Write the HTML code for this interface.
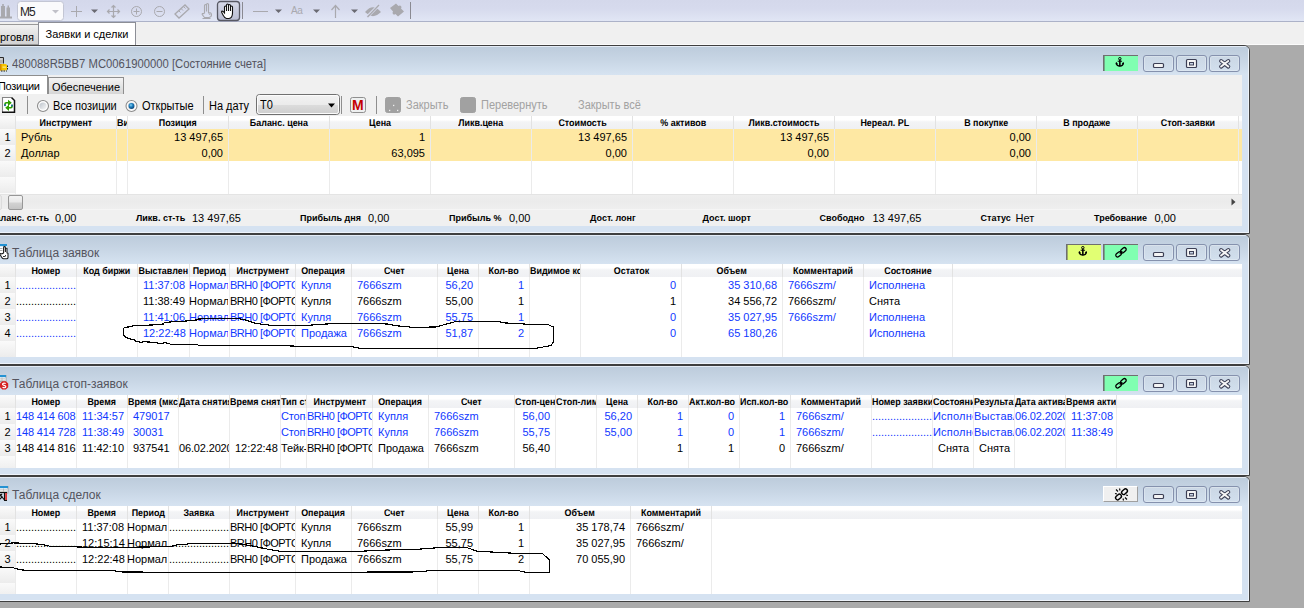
<!DOCTYPE html>
<html lang="ru"><head><meta charset="utf-8"><title>QUIK</title>
<style>
html,body{margin:0;padding:0}
body{width:1304px;height:608px;overflow:hidden;background:#f0f0f0;position:relative;font-family:"Liberation Sans",sans-serif;font-size:11px;color:#000}
div,span{box-sizing:border-box}
.a{position:absolute}
.tb{position:absolute;left:0;top:0;width:1304px;height:21px;background:linear-gradient(#d4d8eb,#d6daed 40%,#e1e6f5)}
.win{position:absolute;left:-9px;width:1259px;border:1px solid #3f3f3f;border-radius:0 6px 0 0;background:#d5e2f1;overflow:hidden}
.ttl{position:absolute;left:0;top:0;width:100%;height:29px;background:linear-gradient(#e4ecf6 0,#e4ecf6 1px,#bdccdc 1px,#c8d6e5 50%,#d6e3f1 100%)}
.ttx{position:absolute;left:20px;top:4px;line-height:29px;font-size:12px;color:#54545e;white-space:nowrap}
.cnt{position:absolute;left:8px;top:29px;width:1242px;background:#fff;overflow:hidden}
.hd{position:absolute;left:0;top:0;width:1242px;height:13px;background:linear-gradient(#fff 0,#fff 30%,#f3f4f6 45%,#eff0f3 100%)}
.hs{flex:none;font-size:9.8px;transform:scaleX(.91);text-rendering:geometricPrecision}
.h.hl{justify-content:flex-start}
.hl .hs{transform-origin:0 50%}
.h{position:absolute;top:0;height:13px;line-height:15px;font-size:9px;font-weight:bold;display:flex;justify-content:center;white-space:nowrap;overflow:hidden;border-right:1px solid #e2e2e2}
.c{position:absolute;height:16px;line-height:16px;white-space:nowrap;overflow:hidden}
.r{text-align:right;padding-right:5px}
.l{padding-left:5px}
.m{text-align:center}
.o{padding-left:0}
.k{letter-spacing:-.5px}
.k2{letter-spacing:-.15px}
.k3{letter-spacing:.2px}
.o1{padding-left:1px}
.on{margin-left:-1px}
.d{padding-left:0;letter-spacing:-.056px}
.b{color:#1038ff}
.gl{position:absolute;width:1px;background:#ebebeb}
.rn{position:absolute;left:0;width:15px;height:16px;line-height:16px;text-align:center;background:linear-gradient(#fafafa,#ececec)}
.wb{position:absolute;top:9px;width:31px;height:17px;border:1px solid #8591ad;border-radius:3px;background:linear-gradient(rgba(255,255,255,.12),rgba(255,255,255,.0));box-shadow:inset 0 0 0 1px rgba(255,255,255,.25)}
.sb{position:absolute;top:9px;width:35px;height:16px}
.dis{color:#a2a2a2}
.sl{position:absolute;top:135px;height:16px;line-height:16px;font-size:9px;font-weight:bold;white-space:nowrap}
.sv{position:absolute;top:135px;height:16px;line-height:16px;font-size:11px;white-space:nowrap}
</style></head>
<body>
<div class="a" style="left:0;top:45px;width:1304px;height:563px;background:#ababab"></div>
<div class="a" style="left:0;top:44px;width:1304px;height:1px;background:#fbfbfb"></div>
<div class="tb"></div>
<div class="a" style="left:0;top:21px;width:1304px;height:1px;background:#acb2c8"></div>
<svg class="a" style="left:0;top:0" width="420" height="22" viewBox="0 0 420 22" fill="none">
<g fill="#a9a9ae"><rect x="0" y="16.500" width="12" height="2"/><rect x="1" y="6" width="4" height="11"/><rect x="2.200" y="4" width="1.600" height="2.500"/><rect x="6.500" y="7.500" width="3.500" height="10"/><rect x="7.500" y="5.500" width="1.500" height="2.500"/></g>
<rect x="17.5" y="1.5" width="46" height="19" rx="3" fill="#fafafc" stroke="#c3c6d4"/>
<path d="M52 10h7l-3.5 3.5z" fill="#c0c0c8"/>
<g stroke="#a9a9ae" stroke-width="1"><path d="M76.5 6v11M71 11.5h11"/></g>
<path d="M91 9.5h7l-3.5 3.5z" fill="#6a6a72"/>
<g stroke="#a9a9ae" stroke-width="1.2"><path d="M113.5 5.5v12M107.5 11.5h12M111.5 7.5l2-2 2 2M111.5 15.5l2 2 2-2M109.5 9.5l-2 2 2 2M117.5 9.5l2 2-2 2"/></g>
<g stroke="#a9a9ae" stroke-width="1"><circle cx="136.5" cy="11.5" r="5"/><path d="M133.5 11.5h6M136.5 8.5v6"/><circle cx="159.5" cy="11.5" r="5"/><path d="M156.5 11.5h6"/></g>
<g stroke="#a9a9ae" stroke-width="1.3"><path d="M175 14l10-9 4 4-10 9z"/><path d="M179 11l1.5 1.5M181.5 9l1.5 1.5M184 7l1.5 1.5" stroke-width="1"/></g>
<g stroke="#a9a9ae" stroke-width="1.100"><path d="M204.500 13v-7.500a1 1 0 0 1 2 0v6v-7a1 1 0 0 1 2 0v8q3-.2 3 2.300q0 2.200-2.500 2.700h-4.500l-2.300-3q-.2-1.500 1.300-.8z"/><path d="M208.500 13.500q1.500.2 1.500 1.500M202.500 18.500h8"/></g>
<defs><linearGradient id="ab" x1="0" y1="0" x2="0" y2="1"><stop offset="0" stop-color="#d6d9e8"/><stop offset="1" stop-color="#b9bdd2"/></linearGradient></defs><rect x="217.500" y="1.500" width="22" height="19" rx="3" fill="url(#ab)" stroke="#585964" stroke-width="1.300"/>
<path d="M224.500 12v-5a1 1 0 0 1 2 0v4v-6a1 1 0 0 1 2 0v6v-5.500a1 1 0 0 1 2 0v5.500v-4a1 1 0 0 1 2 0v6q0 5-3.500 5.500h-2.500q-2-.5-3.500-3.500l-1.500-3q.2-1.500 1.700-.5l1.300 1.500z" fill="#fff" stroke="#111" stroke-width="1.1"/>
<path d="M242.500 2v17" stroke="#8a8a92"/>
<path d="M253 11.500h15" stroke="#a9a9ae" stroke-width="1"/>
<path d="M275 9.500h7l-3.500 3.500z" fill="#6a6a72"/>
<path d="M313 9.500h7l-3.500 3.500z" fill="#6a6a72"/>
<g stroke="#a9a9ae" stroke-width="1.2"><path d="M335.500 18v-12M331.500 10l4-4.500 4 4.500"/></g>
<path d="M351 9.500h7l-3.500 3.500z" fill="#6a6a72"/>
<g stroke="#a9a9ae" stroke-width="1.3"><path d="M366 12q7-8 14 0q-7 7-14 0z" fill="#a9a9ae"/><path d="M367 17l12-12" stroke="#dadef0" stroke-width="3"/><path d="M367.500 17l11.500-12"/></g>
<path d="M390 8l6-4.500 2.500 2.500q1.500-1 2.500 0t0 2.500l3 3-6 5-2.500-2.500q-1.500 1-2.500 0t0-2.500z" fill="#a9a9ae"/>
<path d="M410.500 2v17" stroke="#8a8a92"/>
</svg>
<span class="a" style="left:20px;top:5px;font-size:12px;line-height:14px;color:#222;letter-spacing:-1px">M5</span>
<span class="a" style="left:291px;top:4px;font-size:10px;line-height:14px;color:#a9a9ae;letter-spacing:-.3px">Aa</span>
<div class="a" style="left:-2px;top:24px;width:41px;height:21px;border:1px solid #999;background:linear-gradient(#f2f2f2,#d2d2d2);line-height:25px;white-space:nowrap;padding-left:1px;font-size:11px">рговля</div>
<div class="a" style="left:38px;top:22px;width:98px;height:23px;border:1px solid #8c8e96;border-bottom:none;background:#fff;line-height:23px;text-align:center;font-size:11px;white-space:nowrap">Заявки и сделки</div>
<div class="win" style="top:45px;height:189px"><div class="ttl"></div><svg class="a" style="left:8px;top:11px" width="9" height="15" viewBox="0 0 9 15"><rect x="-1" y="0.500" width="4.500" height="6" fill="#b4b4b4"/><path d="M-1 0.500h4.500v6" fill="none" stroke="#2a2a2a" stroke-width="1"/><path d="M0 2h2.500" stroke="#e8e8e8" stroke-width="1"/><rect x="-1" y="7" width="8" height="6.500" rx="1.500" fill="#f5c400"/><rect x="-1" y="7" width="2.500" height="6.500" fill="#d88a00"/><rect x="2.500" y="9.500" width="3.500" height="1.300" fill="#ffe680"/><path d="M7.500 8.500v5M1 14h6" stroke="#222" stroke-width="1" stroke-dasharray="1.500 1"/></svg><div class="ttx" style="transform:scaleX(.94);transform-origin:0 50%">480088R5BB7 MC0061900000 [Состояние счета]</div><div class="sb" style="left:1111px;background:#80ffb1;border-top:1px solid #6f6f6f;border-left:1px solid #6f6f6f;box-shadow:inset 1px 0 0 rgba(100,100,100,.55)"><svg class="a" style="left:11.100px;top:1.400px" width="9.700" height="10.600" viewBox="0 0 11 12" fill="none"><circle cx="5.500" cy="1.900" r="1.400" stroke="#000" stroke-width="1.100"/><path d="M5.500 3v7.500" stroke="#000" stroke-width="1.800"/><path d="M3 4.800h5" stroke="#000" stroke-width="1.100"/><path d="M1.500 6.500q.3 3.800 4 3.800q3.700 0 4-3.800" stroke="#000" stroke-width="1.700"/><path d="M.6 8.200l.9-2.600 1.700 2z M10.400 8.200l-.9-2.600-1.700 2z" fill="#000"/></svg></div><div class="wb" style="left:1151px"></div><div class="wb" style="left:1184px"></div><div class="wb" style="left:1217px"></div><svg class="a" style="left:1151px;top:9px" width="100" height="17" viewBox="0 0 100 17" fill="none">
<rect x="10.500" y="8.500" width="10" height="4" rx="1" fill="#f4f4f4" stroke="#3c3f55" stroke-width="1.2"/>
<rect x="43.500" y="4.500" width="10" height="8" rx="1" fill="#f4f4f4" stroke="#3c3f55" stroke-width="1.2"/><rect x="46.500" y="7.500" width="4" height="2.500" fill="#c8d3e4" stroke="#3c3f55" stroke-width="1"/>
<path d="M78.100 6l7.200 5.600M85.300 6l-7.200 5.600" stroke="#3c3f55" stroke-width="4" stroke-linecap="round"/><path d="M78.100 6l7.200 5.600M85.300 6l-7.200 5.600" stroke="#f6f6f6" stroke-width="1.900" stroke-linecap="round"/>
</svg><div class="a" style="left:1256px;top:1px;width:1px;height:189px;background:#eef3fa"></div><div class="a" style="left:0;bottom:0;width:1257px;height:1px;background:#eef3fa"></div><div class="cnt" style="height:151px"><div class="a" style="left:0;top:0;width:1242px;height:41px;background:#f0f0f0"></div><div class="a" style="left:48px;top:2px;width:76px;height:17px;border:1px solid #8e8e8e;border-bottom:none;background:linear-gradient(#f4f4f4,#d6d6d6);line-height:19px;text-align:center;white-space:nowrap">Обеспечение</div><div class="a" style="left:-2px;top:0;width:50px;height:19px;border:1px solid #8e8e8e;border-bottom:none;background:#fff;line-height:21px;white-space:nowrap;padding-left:0px;text-indent:-1px;letter-spacing:-.3px">Позиции</div><svg class="a" style="left:0;top:19px" width="660" height="22" viewBox="0 0 660 22" fill="none">
<path d="M2.500 3.500h9l3 3v12h-12z" fill="#fff"/><path d="M2.500 18.500v-15h9" stroke="#858585" stroke-width="1.100"/><path d="M11.500 3.500l3 3v11.700h-12.500" stroke="#111" stroke-width="1.500"/>
<path d="M4.200 11.800v-1.800q0-2 2-2h1.800v-2.300l3.800 3.100-3.800 3.100v-2.300h-1.500q-.7 0-.7.700v1.500z" fill="#2ea000"/><path d="M12.800 10.800v1.800q0 2-2 2h-1.800v2.300l-3.800-3.100 3.800-3.100v2.300h1.500q.7 0 .7-.700v-1.500z" fill="#2ea000"/><rect x="4.200" y="10.300" width="1.600" height="1.800" fill="#1565a8"/><rect x="11.200" y="10.600" width="1.600" height="1.800" fill="#1565a8"/>
<path d="M27.500 2v18M203.500 2v18M341.500 2v18M376.500 2v18" stroke="#8e8e8e"/>
<defs><linearGradient id="rg" x1="0" y1="0" x2="1" y2="1"><stop offset="0" stop-color="#bcc3cb"/><stop offset="1" stop-color="#fafafa"/></linearGradient><radialGradient id="rb" cx=".4" cy=".35" r=".7"><stop offset="0" stop-color="#8fd6f4"/><stop offset=".45" stop-color="#1c7fc0"/><stop offset="1" stop-color="#0c3e6e"/></radialGradient></defs>
<circle cx="43" cy="12" r="5.500" fill="#fdfdfd" stroke="#8c8c8c" stroke-width="1.100"/><circle cx="43" cy="12" r="3.600" fill="url(#rg)"/>
<circle cx="131.500" cy="12" r="5.500" fill="#fdfdfd" stroke="#8c8c8c" stroke-width="1.100"/><circle cx="131.500" cy="12" r="3.600" fill="url(#rg)"/><circle cx="131.500" cy="12" r="2.900" fill="url(#rb)"/>
<rect x="256.500" y="0.500" width="83" height="20" rx="3" fill="#e4e4e4" stroke="#707070"/>
<rect x="257.500" y="1.500" width="81" height="18" rx="2" fill="url(#cg)" stroke="#fcfcfc"/>
<defs><linearGradient id="cg" x1="0" y1="0" x2="0" y2="1"><stop offset="0" stop-color="#f2f2f2"/><stop offset=".5" stop-color="#ebebeb"/><stop offset=".5" stop-color="#dddddd"/><stop offset="1" stop-color="#cfcfcf"/></linearGradient></defs>
<path d="M328 9.500h7l-3.500 4z" fill="#000"/>
<rect x="350.500" y="3.500" width="15" height="15" rx="2" fill="#eef0f0" stroke="#8f8f8f"/>
<rect x="385.500" y="3.500" width="15" height="15" rx="2" fill="#a1a1a1" stroke="#a1a1a1"/><rect x="389" y="15.800" width="1.300" height="1.300" fill="#f0f0f0"/><rect x="397" y="15.800" width="1.300" height="1.300" fill="#f0f0f0"/><rect x="393" y="10.800" width="1.300" height="1.300" fill="#f0f0f0"/>
<rect x="460.500" y="3.500" width="15" height="15" rx="2" fill="#a1a1a1" stroke="#a1a1a1"/>
</svg><span class="a" style="left:53px;top:23px;line-height:16px;white-space:nowrap;font-size:12px;transform:scaleX(.917);transform-origin:0 50%;">Все позиции</span><span class="a" style="left:142px;top:23px;line-height:16px;white-space:nowrap;font-size:12px;transform:scaleX(.917);transform-origin:0 50%;">Открытые</span><span class="a" style="left:209px;top:23px;line-height:16px;white-space:nowrap;font-size:12px;transform:scaleX(.917);transform-origin:0 50%;">На дату</span><span class="a" style="left:260px;top:22px;line-height:16px;white-space:nowrap;font-size:12px;transform:scaleX(.917);transform-origin:0 50%;">T0</span><span class="a" style="left:352px;top:22px;line-height:16px;white-space:nowrap;font-size:12px;transform:scaleX(.917);transform-origin:0 50%;color:#c40000;font-weight:bold;font-size:14px;transform:none">M</span><span class="a" style="left:406px;top:22px;line-height:16px;white-space:nowrap;font-size:12px;transform:scaleX(.917);transform-origin:0 50%;color:#a2a2a2">Закрыть</span><span class="a" style="left:481px;top:22px;line-height:16px;white-space:nowrap;font-size:12px;transform:scaleX(.917);transform-origin:0 50%;color:#a2a2a2">Перевернуть</span><span class="a" style="left:578px;top:22px;line-height:16px;white-space:nowrap;font-size:12px;transform:scaleX(.917);transform-origin:0 50%;color:#a2a2a2">Закрыть всё</span><div class="a" style="left:0;top:41px;width:1242px;height:78px;background:#fff;overflow:hidden"><div class="a" style="left:16px;top:13px;width:1226px;height:32px;background:#fee8a3"></div><div class="hd"></div><div class="h" style="left:0;width:16px;background:linear-gradient(#fbfbfb,#ececec)"></div><div class="h" style="left:16px;width:101px"><span class="hs">Инструмент</span></div><div class="h hl" style="left:117px;width:11px"><span class="hs">Ви</span></div><div class="h" style="left:128px;width:101px"><span class="hs">Позиция</span></div><div class="h" style="left:229px;width:101px"><span class="hs">Баланс. цена</span></div><div class="h" style="left:330px;width:101px"><span class="hs">Цена</span></div><div class="h" style="left:431px;width:101px"><span class="hs">Ликв.цена</span></div><div class="h" style="left:532px;width:101px"><span class="hs">Стоимость</span></div><div class="h" style="left:633px;width:101px"><span class="hs">% активов</span></div><div class="h" style="left:734px;width:101px"><span class="hs">Ликв.стоимость</span></div><div class="h" style="left:835px;width:101px"><span class="hs">Нереал. PL</span></div><div class="h" style="left:936px;width:101px"><span class="hs">В покупке</span></div><div class="h" style="left:1037px;width:101px"><span class="hs">В продаже</span></div><div class="h" style="left:1138px;width:101px"><span class="hs">Стоп-заявки</span></div><div class="gl" style="left:15px;top:13px;height:65px"></div><div class="gl" style="left:116px;top:13px;height:65px"></div><div class="gl" style="left:127px;top:13px;height:65px"></div><div class="gl" style="left:228px;top:13px;height:65px"></div><div class="gl" style="left:329px;top:13px;height:65px"></div><div class="gl" style="left:430px;top:13px;height:65px"></div><div class="gl" style="left:531px;top:13px;height:65px"></div><div class="gl" style="left:632px;top:13px;height:65px"></div><div class="gl" style="left:733px;top:13px;height:65px"></div><div class="gl" style="left:834px;top:13px;height:65px"></div><div class="gl" style="left:935px;top:13px;height:65px"></div><div class="gl" style="left:1036px;top:13px;height:65px"></div><div class="gl" style="left:1137px;top:13px;height:65px"></div><div class="gl" style="left:1238px;top:13px;height:65px"></div><div class="rn" style="top:13px">1</div><div class="rn" style="top:29px">2</div><div class="rn" style="top:45px"></div><div class="rn" style="top:61px"></div><div class="rn" style="top:77px"></div><div class="c l " style="left:16px;top:13px;width:100px">Рубль</div><div class="c r " style="left:128px;top:13px;width:100px">13 497,65</div><div class="c r " style="left:330px;top:13px;width:100px">1</div><div class="c r " style="left:532px;top:13px;width:100px">13 497,65</div><div class="c r " style="left:734px;top:13px;width:100px">13 497,65</div><div class="c r " style="left:936px;top:13px;width:100px">0,00</div><div class="c l " style="left:16px;top:29px;width:100px">Доллар</div><div class="c r " style="left:128px;top:29px;width:100px">0,00</div><div class="c r " style="left:330px;top:29px;width:100px">63,095</div><div class="c r " style="left:532px;top:29px;width:100px">0,00</div><div class="c r " style="left:734px;top:29px;width:100px">0,00</div><div class="c r " style="left:936px;top:29px;width:100px">0,00</div></div><div class="a" style="left:0;top:119px;width:1242px;height:16px;background:linear-gradient(#eeeeee,#ebebeb 50%,#efefef);border-top:1px solid #e4e4e4;border-bottom:1px solid #f5f5f5"></div><div class="a" style="left:8px;top:120px;width:15px;height:15px;border:1px solid #979797;border-radius:2px;background:linear-gradient(#f4f4f4 0,#e8e8e8 45%,#d2d2d2 55%,#c4c4c4 100%)"></div><div class="a" style="left:-12px;top:120px;width:14px;height:15px;border:1px solid #dcdcdc;border-radius:2px;background:#eaeaea"></div><svg class="a" style="left:1228px;top:121px" width="10" height="12" viewBox="0 0 10 12"><path d="M3.500 2.500l4 3.500-4 3.500z" fill="#444"/></svg><div class="a" style="left:0;top:135px;width:1242px;height:16px;background:#f0f0f0"></div><span class="sl" style="right:1193px">Баланс. ст-ть</span><span class="sv" style="left:55px">0,00</span><span class="sl" style="left:136px">Ликв. ст-ть</span><span class="sv" style="left:192px">13 497,65</span><span class="sl" style="left:300px">Прибыль дня</span><span class="sv" style="left:368px">0,00</span><span class="sl" style="left:449px">Прибыль %</span><span class="sv" style="left:509px">0,00</span><span class="sl" style="left:590px">Дост. лонг</span><span class="sl" style="left:702.5px">Дост. шорт</span><span class="sl" style="left:819.5px">Свободно</span><span class="sv" style="left:872.5px">13 497,65</span><span class="sl" style="left:980.5px">Статус</span><span class="sv" style="left:1015.5px">Нет</span><span class="sl" style="left:1094px">Требование</span><span class="sv" style="left:1154.5px">0,00</span></div></div>
<div class="win" style="top:234px;height:131px"><div class="ttl"></div><svg class="a" style="left:8px;top:9px" width="9" height="16" viewBox="0 0 9 16"><rect x="-1" y="0" width="8" height="9" fill="#fff"/><rect x="-1" y="0" width="8" height="2.200" fill="#2492d2"/><path d="M0 4.500h2.500M0 6.500h2.500" stroke="#b0b0b0" stroke-width="1"/><path d="M3.600 9v-5.500a.9.900 0 0 1 1.800 0v4v-3.500l1.600.4v4.600l1 .2v4.300q0 1.300-1.300 1.300h-3.200q-1.200-.2-2-1.800l-1.600-2.800q.5-1.200 1.700-.3z" fill="#fff" stroke="#1e1e1e" stroke-width="1.100" stroke-linejoin="round"/><path d="M3 12.500h2M5.500 11v1.500" stroke="#1e1e1e" stroke-width=".9"/></svg><div class="ttx">Таблица заявок</div><div class="sb" style="left:1074px;background:#e1ff73;border-top:1px solid #6f6f6f;border-left:1px solid #6f6f6f;box-shadow:inset 1px 0 0 rgba(100,100,100,.55)"><svg class="a" style="left:11.100px;top:1.400px" width="9.700" height="10.600" viewBox="0 0 11 12" fill="none"><circle cx="5.500" cy="1.900" r="1.400" stroke="#000" stroke-width="1.100"/><path d="M5.500 3v7.500" stroke="#000" stroke-width="1.800"/><path d="M3 4.800h5" stroke="#000" stroke-width="1.100"/><path d="M1.500 6.500q.3 3.800 4 3.800q3.700 0 4-3.800" stroke="#000" stroke-width="1.700"/><path d="M.6 8.200l.9-2.600 1.700 2z M10.400 8.200l-.9-2.600-1.700 2z" fill="#000"/></svg></div><div class="sb" style="left:1111px;background:#80ffb1;border-top:1px solid #6f6f6f;border-left:1px solid #6f6f6f;box-shadow:inset 1px 0 0 rgba(100,100,100,.55)"><svg class="a" style="left:8px;top:0" width="18" height="15" viewBox="0 0 18 15" fill="none"><g stroke="#000" stroke-width="1.300"><rect x="-3.100" y="-1.800" width="6.200" height="3.600" rx="1.800" transform="translate(11.400 5.200) rotate(-40)"/><rect x="-3.100" y="-1.800" width="6.200" height="3.600" rx="1.800" transform="translate(6.600 9.400) rotate(-40)"/><path d="M7.700 8.500l2.600-2.300"/></g></svg></div><div class="wb" style="left:1151px"></div><div class="wb" style="left:1184px"></div><div class="wb" style="left:1217px"></div><svg class="a" style="left:1151px;top:9px" width="100" height="17" viewBox="0 0 100 17" fill="none">
<rect x="10.500" y="8.500" width="10" height="4" rx="1" fill="#f4f4f4" stroke="#3c3f55" stroke-width="1.2"/>
<rect x="43.500" y="4.500" width="10" height="8" rx="1" fill="#f4f4f4" stroke="#3c3f55" stroke-width="1.2"/><rect x="46.500" y="7.500" width="4" height="2.500" fill="#c8d3e4" stroke="#3c3f55" stroke-width="1"/>
<path d="M78.100 6l7.200 5.600M85.300 6l-7.200 5.600" stroke="#3c3f55" stroke-width="4" stroke-linecap="round"/><path d="M78.100 6l7.200 5.600M85.300 6l-7.200 5.600" stroke="#f6f6f6" stroke-width="1.900" stroke-linecap="round"/>
</svg><div class="a" style="left:1256px;top:1px;width:1px;height:131px;background:#eef3fa"></div><div class="a" style="left:0;bottom:0;width:1257px;height:1px;background:#eef3fa"></div><div class="cnt" style="height:93px"><div class="hd"></div><div class="h" style="left:0;width:16px;background:linear-gradient(#fbfbfb,#ececec)"></div><div class="h" style="left:16px;width:61px"><span class="hs">Номер</span></div><div class="h" style="left:77px;width:61px"><span class="hs">Код биржи</span></div><div class="h" style="left:138px;width:52px"><span class="hs">Выставлен</span></div><div class="h" style="left:190px;width:40px"><span class="hs">Период</span></div><div class="h" style="left:230px;width:66px"><span class="hs">Инструмент</span></div><div class="h" style="left:296px;width:56px"><span class="hs">Операция</span></div><div class="h" style="left:352px;width:86px"><span class="hs">Счет</span></div><div class="h" style="left:438px;width:41px"><span class="hs">Цена</span></div><div class="h" style="left:479px;width:51px"><span class="hs">Кол-во</span></div><div class="h hl" style="left:530px;width:51px"><span class="hs">Видимое кол</span></div><div class="h" style="left:581px;width:101px"><span class="hs">Остаток</span></div><div class="h" style="left:682px;width:101px"><span class="hs">Объем</span></div><div class="h" style="left:783px;width:81px"><span class="hs">Комментарий</span></div><div class="h" style="left:864px;width:89px"><span class="hs">Состояние</span></div><div class="gl" style="left:15px;top:13px;height:80px"></div><div class="gl" style="left:76px;top:13px;height:80px"></div><div class="gl" style="left:137px;top:13px;height:80px"></div><div class="gl" style="left:189px;top:13px;height:80px"></div><div class="gl" style="left:229px;top:13px;height:80px"></div><div class="gl" style="left:295px;top:13px;height:80px"></div><div class="gl" style="left:351px;top:13px;height:80px"></div><div class="gl" style="left:437px;top:13px;height:80px"></div><div class="gl" style="left:478px;top:13px;height:80px"></div><div class="gl" style="left:529px;top:13px;height:80px"></div><div class="gl" style="left:580px;top:13px;height:80px"></div><div class="gl" style="left:681px;top:13px;height:80px"></div><div class="gl" style="left:782px;top:13px;height:80px"></div><div class="gl" style="left:863px;top:13px;height:80px"></div><div class="gl" style="left:952px;top:13px;height:80px"></div><div class="rn" style="top:13px">1</div><div class="rn" style="top:29px">2</div><div class="rn" style="top:45px">3</div><div class="rn" style="top:61px">4</div><div class="rn" style="top:77px"></div><div class="c d b" style="left:16px;top:13px;width:60px">......................</div><div class="c l b" style="left:138px;top:13px;width:51px">11:37:08</div><div class="c on b" style="left:190px;top:13px;width:39px">Нормальная</div><div class="c o k b" style="left:230px;top:13px;width:65px">BRH0 [ФОРТС</div><div class="c l b" style="left:296px;top:13px;width:55px">Купля</div><div class="c l b" style="left:352px;top:13px;width:85px">7666szm</div><div class="c r b" style="left:438px;top:13px;width:40px">56,20</div><div class="c r b" style="left:479px;top:13px;width:50px">1</div><div class="c r b" style="left:581px;top:13px;width:100px">0</div><div class="c r b" style="left:682px;top:13px;width:100px">35 310,68</div><div class="c l b" style="left:783px;top:13px;width:80px">7666szm/</div><div class="c l b" style="left:864px;top:13px;width:88px">Исполнена</div><div class="c d " style="left:16px;top:29px;width:60px">......................</div><div class="c l " style="left:138px;top:29px;width:51px">11:38:49</div><div class="c on " style="left:190px;top:29px;width:39px">Нормальная</div><div class="c o k " style="left:230px;top:29px;width:65px">BRH0 [ФОРТС</div><div class="c l " style="left:296px;top:29px;width:55px">Купля</div><div class="c l " style="left:352px;top:29px;width:85px">7666szm</div><div class="c r " style="left:438px;top:29px;width:40px">55,00</div><div class="c r " style="left:479px;top:29px;width:50px">1</div><div class="c r " style="left:581px;top:29px;width:100px">1</div><div class="c r " style="left:682px;top:29px;width:100px">34 556,72</div><div class="c l " style="left:783px;top:29px;width:80px">7666szm/</div><div class="c l " style="left:864px;top:29px;width:88px">Снята</div><div class="c d b" style="left:16px;top:45px;width:60px">......................</div><div class="c l b" style="left:138px;top:45px;width:51px">11:41:06</div><div class="c on b" style="left:190px;top:45px;width:39px">Нормальная</div><div class="c o k b" style="left:230px;top:45px;width:65px">BRH0 [ФОРТС</div><div class="c l b" style="left:296px;top:45px;width:55px">Купля</div><div class="c l b" style="left:352px;top:45px;width:85px">7666szm</div><div class="c r b" style="left:438px;top:45px;width:40px">55,75</div><div class="c r b" style="left:479px;top:45px;width:50px">1</div><div class="c r b" style="left:581px;top:45px;width:100px">0</div><div class="c r b" style="left:682px;top:45px;width:100px">35 027,95</div><div class="c l b" style="left:783px;top:45px;width:80px">7666szm/</div><div class="c l b" style="left:864px;top:45px;width:88px">Исполнена</div><div class="c d b" style="left:16px;top:61px;width:60px">......................</div><div class="c l b" style="left:138px;top:61px;width:51px">12:22:48</div><div class="c on b" style="left:190px;top:61px;width:39px">Нормальная</div><div class="c o k b" style="left:230px;top:61px;width:65px">BRH0 [ФОРТС</div><div class="c l b" style="left:296px;top:61px;width:55px">Продажа</div><div class="c l b" style="left:352px;top:61px;width:85px">7666szm</div><div class="c r b" style="left:438px;top:61px;width:40px">51,87</div><div class="c r b" style="left:479px;top:61px;width:50px">2</div><div class="c r b" style="left:581px;top:61px;width:100px">0</div><div class="c r b" style="left:682px;top:61px;width:100px">65 180,26</div><div class="c l b" style="left:864px;top:61px;width:88px">Исполнена</div></div></div>
<div class="win" style="top:365px;height:111px"><div class="ttl"></div><svg class="a" style="left:8px;top:9px" width="9" height="16" viewBox="0 0 9 16"><rect x="-1" y="0" width="7" height="6.500" fill="#fff" stroke="#9a9a9a" stroke-width=".8"/><rect x="-1" y="0" width="7" height="2.200" fill="#2492d2"/><path d="M0 3.800h5M0 5.300h5M2 2.500v4" stroke="#b4b4b4" stroke-width=".8"/><path d="M2.300 6.300h3.600l2.300 2.300v3.600l-2.300 2.300h-3.600l-2.300-2.300v-3.600z" fill="#d62222"/><path d="M5.700 8.600q-1.800-1-3 0q-.8 1.300 1.400 1.800q2.400.6 1.500 1.900q-1.300 1-3.100-.1" fill="none" stroke="#fff" stroke-width="1.100"/></svg><div class="ttx">Таблица стоп-заявок</div><div class="sb" style="left:1111px;background:#80ffb1;border-top:1px solid #6f6f6f;border-left:1px solid #6f6f6f;box-shadow:inset 1px 0 0 rgba(100,100,100,.55)"><svg class="a" style="left:8px;top:0" width="18" height="15" viewBox="0 0 18 15" fill="none"><g stroke="#000" stroke-width="1.300"><rect x="-3.100" y="-1.800" width="6.200" height="3.600" rx="1.800" transform="translate(11.400 5.200) rotate(-40)"/><rect x="-3.100" y="-1.800" width="6.200" height="3.600" rx="1.800" transform="translate(6.600 9.400) rotate(-40)"/><path d="M7.700 8.500l2.600-2.300"/></g></svg></div><div class="wb" style="left:1151px"></div><div class="wb" style="left:1184px"></div><div class="wb" style="left:1217px"></div><svg class="a" style="left:1151px;top:9px" width="100" height="17" viewBox="0 0 100 17" fill="none">
<rect x="10.500" y="8.500" width="10" height="4" rx="1" fill="#f4f4f4" stroke="#3c3f55" stroke-width="1.2"/>
<rect x="43.500" y="4.500" width="10" height="8" rx="1" fill="#f4f4f4" stroke="#3c3f55" stroke-width="1.2"/><rect x="46.500" y="7.500" width="4" height="2.500" fill="#c8d3e4" stroke="#3c3f55" stroke-width="1"/>
<path d="M78.100 6l7.200 5.600M85.300 6l-7.200 5.600" stroke="#3c3f55" stroke-width="4" stroke-linecap="round"/><path d="M78.100 6l7.200 5.600M85.300 6l-7.200 5.600" stroke="#f6f6f6" stroke-width="1.900" stroke-linecap="round"/>
</svg><div class="a" style="left:1256px;top:1px;width:1px;height:111px;background:#eef3fa"></div><div class="a" style="left:0;bottom:0;width:1257px;height:1px;background:#eef3fa"></div><div class="cnt" style="height:73px"><div class="hd"></div><div class="h" style="left:0;width:16px;background:linear-gradient(#fbfbfb,#ececec)"></div><div class="h" style="left:16px;width:61px"><span class="hs">Номер</span></div><div class="h" style="left:77px;width:51px"><span class="hs">Время</span></div><div class="h hl" style="left:128px;width:51px"><span class="hs">Время (мкс)</span></div><div class="h hl" style="left:179px;width:51px"><span class="hs">Дата снятия</span></div><div class="h hl" style="left:230px;width:51px"><span class="hs">Время снятия</span></div><div class="h hl" style="left:281px;width:26px"><span class="hs">Тип стоп</span></div><div class="h" style="left:307px;width:66px"><span class="hs">Инструмент</span></div><div class="h" style="left:373px;width:56px"><span class="hs">Операция</span></div><div class="h" style="left:429px;width:86px"><span class="hs">Счет</span></div><div class="h hl" style="left:515px;width:41px"><span class="hs">Стоп-цена</span></div><div class="h hl" style="left:556px;width:41px"><span class="hs">Стоп-лимит</span></div><div class="h" style="left:597px;width:41px"><span class="hs">Цена</span></div><div class="h" style="left:638px;width:51px"><span class="hs">Кол-во</span></div><div class="h hl" style="left:689px;width:51px"><span class="hs">Акт.кол-во</span></div><div class="h hl" style="left:740px;width:51px"><span class="hs">Исп.кол-во</span></div><div class="h" style="left:791px;width:81px"><span class="hs">Комментарий</span></div><div class="h hl" style="left:872px;width:61px"><span class="hs">Номер заявки</span></div><div class="h hl" style="left:933px;width:41px"><span class="hs">Состояние</span></div><div class="h hl" style="left:974px;width:41px"><span class="hs">Результат</span></div><div class="h hl" style="left:1015px;width:51px"><span class="hs">Дата активации</span></div><div class="h hl" style="left:1066px;width:51px"><span class="hs">Время активации</span></div><div class="gl" style="left:15px;top:13px;height:60px"></div><div class="gl" style="left:76px;top:13px;height:60px"></div><div class="gl" style="left:127px;top:13px;height:60px"></div><div class="gl" style="left:178px;top:13px;height:60px"></div><div class="gl" style="left:229px;top:13px;height:60px"></div><div class="gl" style="left:280px;top:13px;height:60px"></div><div class="gl" style="left:306px;top:13px;height:60px"></div><div class="gl" style="left:372px;top:13px;height:60px"></div><div class="gl" style="left:428px;top:13px;height:60px"></div><div class="gl" style="left:514px;top:13px;height:60px"></div><div class="gl" style="left:555px;top:13px;height:60px"></div><div class="gl" style="left:596px;top:13px;height:60px"></div><div class="gl" style="left:637px;top:13px;height:60px"></div><div class="gl" style="left:688px;top:13px;height:60px"></div><div class="gl" style="left:739px;top:13px;height:60px"></div><div class="gl" style="left:790px;top:13px;height:60px"></div><div class="gl" style="left:871px;top:13px;height:60px"></div><div class="gl" style="left:932px;top:13px;height:60px"></div><div class="gl" style="left:973px;top:13px;height:60px"></div><div class="gl" style="left:1014px;top:13px;height:60px"></div><div class="gl" style="left:1065px;top:13px;height:60px"></div><div class="gl" style="left:1116px;top:13px;height:60px"></div><div class="rn" style="top:13px">1</div><div class="rn" style="top:29px">2</div><div class="rn" style="top:45px">3</div><div class="rn" style="top:61px"></div><div class="c o k2 b" style="left:16px;top:13px;width:60px">148 414 608</div><div class="c l b" style="left:77px;top:13px;width:50px">11:34:57</div><div class="c l b" style="left:128px;top:13px;width:50px">479017</div><div class="c o k2 b" style="left:281px;top:13px;width:25px">Стоп-лимит</div><div class="c o k b" style="left:307px;top:13px;width:65px">BRH0 [ФОРТС</div><div class="c l b" style="left:373px;top:13px;width:55px">Купля</div><div class="c l b" style="left:429px;top:13px;width:85px">7666szm</div><div class="c r b" style="left:515px;top:13px;width:40px">56,00</div><div class="c r b" style="left:597px;top:13px;width:40px">56,20</div><div class="c r b" style="left:638px;top:13px;width:50px">1</div><div class="c r b" style="left:689px;top:13px;width:50px">0</div><div class="c r b" style="left:740px;top:13px;width:50px">1</div><div class="c l b" style="left:791px;top:13px;width:80px">7666szm/</div><div class="c d b" style="left:872px;top:13px;width:60px">......................</div><div class="c o k3 b" style="left:933px;top:13px;width:40px">Исполнена</div><div class="c o k3 b" style="left:974px;top:13px;width:40px">Выставлена</div><div class="c o k2 b" style="left:1015px;top:13px;width:50px">06.02.2020</div><div class="c l b" style="left:1066px;top:13px;width:50px">11:37:08</div><div class="c o k2 b" style="left:16px;top:29px;width:60px">148 414 728</div><div class="c l b" style="left:77px;top:29px;width:50px">11:38:49</div><div class="c l b" style="left:128px;top:29px;width:50px">30031</div><div class="c o k2 b" style="left:281px;top:29px;width:25px">Стоп-лимит</div><div class="c o k b" style="left:307px;top:29px;width:65px">BRH0 [ФОРТС</div><div class="c l b" style="left:373px;top:29px;width:55px">Купля</div><div class="c l b" style="left:429px;top:29px;width:85px">7666szm</div><div class="c r b" style="left:515px;top:29px;width:40px">55,75</div><div class="c r b" style="left:597px;top:29px;width:40px">55,00</div><div class="c r b" style="left:638px;top:29px;width:50px">1</div><div class="c r b" style="left:689px;top:29px;width:50px">0</div><div class="c r b" style="left:740px;top:29px;width:50px">1</div><div class="c l b" style="left:791px;top:29px;width:80px">7666szm/</div><div class="c d b" style="left:872px;top:29px;width:60px">......................</div><div class="c o k3 b" style="left:933px;top:29px;width:40px">Исполнена</div><div class="c o k3 b" style="left:974px;top:29px;width:40px">Выставлена</div><div class="c o k2 b" style="left:1015px;top:29px;width:50px">06.02.2020</div><div class="c l b" style="left:1066px;top:29px;width:50px">11:38:49</div><div class="c o k2 " style="left:16px;top:45px;width:60px">148 414 816</div><div class="c l " style="left:77px;top:45px;width:50px">11:42:10</div><div class="c l " style="left:128px;top:45px;width:50px">937541</div><div class="c o k2 " style="left:179px;top:45px;width:50px">06.02.2020</div><div class="c l " style="left:230px;top:45px;width:50px">12:22:48</div><div class="c o k2 " style="left:281px;top:45px;width:25px">Тейк-профит</div><div class="c o k " style="left:307px;top:45px;width:65px">BRH0 [ФОРТС</div><div class="c l " style="left:373px;top:45px;width:55px">Продажа</div><div class="c l " style="left:429px;top:45px;width:85px">7666szm</div><div class="c r " style="left:515px;top:45px;width:40px">56,40</div><div class="c r " style="left:638px;top:45px;width:50px">1</div><div class="c r " style="left:689px;top:45px;width:50px">1</div><div class="c r " style="left:740px;top:45px;width:50px">0</div><div class="c l " style="left:791px;top:45px;width:80px">7666szm/</div><div class="c l " style="left:933px;top:45px;width:40px">Снята</div><div class="c l " style="left:974px;top:45px;width:40px">Снята</div></div></div>
<div class="win" style="top:476px;height:126px"><div class="ttl"></div><svg class="a" style="left:8px;top:9px" width="9" height="16" viewBox="0 0 9 16"><rect x="-1" y="0" width="9" height="7" fill="#fff" stroke="#9a9a9a" stroke-width=".8"/><rect x="-1" y="0" width="9" height="2.200" fill="#2492d2"/><path d="M0 3.800h7M0 5.300h7M3.500 2.500v4" stroke="#b4b4b4" stroke-width=".8"/><rect x="5.200" y="7" width="1.800" height="7" fill="#e03434"/><path d="M-1 6.500h8M-1 7.500l5.500 6.500M-1 11l3-3M-1 14l3.500-3.500M4.500 7v7.500h2.500" fill="none" stroke="#111" stroke-width="1.100"/></svg><div class="ttx">Таблица сделок</div><div class="sb" style="left:1111px;background:#f0f0f0;border-top:1px solid #fff;border-left:1px solid #fff;border-bottom:1px solid #a0a0a0;border-right:1px solid #a0a0a0"><svg class="a" style="left:9px;top:0" width="18" height="15" viewBox="0 0 18 15" fill="none"><g stroke="#000" stroke-width="1.400"><rect x="-3.200" y="-2" width="6.400" height="4" rx="2" transform="translate(11.500 4.700) rotate(-42)"/><rect x="-3.200" y="-2" width="6.400" height="4" rx="2" transform="translate(5.500 10) rotate(-42)"/><path d="M3 2.500l2 2M6.500 1.500l.5 2M2 6.500l2 .5M14 12.500l-2-2M10.500 13.500l-.5-2M15 8.500l-2-.5" stroke-width="1.100"/></g></svg></div><div class="wb" style="left:1151px"></div><div class="wb" style="left:1184px"></div><div class="wb" style="left:1217px"></div><svg class="a" style="left:1151px;top:9px" width="100" height="17" viewBox="0 0 100 17" fill="none">
<rect x="10.500" y="8.500" width="10" height="4" rx="1" fill="#f4f4f4" stroke="#3c3f55" stroke-width="1.2"/>
<rect x="43.500" y="4.500" width="10" height="8" rx="1" fill="#f4f4f4" stroke="#3c3f55" stroke-width="1.2"/><rect x="46.500" y="7.500" width="4" height="2.500" fill="#c8d3e4" stroke="#3c3f55" stroke-width="1"/>
<path d="M78.100 6l7.200 5.600M85.300 6l-7.200 5.600" stroke="#3c3f55" stroke-width="4" stroke-linecap="round"/><path d="M78.100 6l7.200 5.600M85.300 6l-7.200 5.600" stroke="#f6f6f6" stroke-width="1.900" stroke-linecap="round"/>
</svg><div class="a" style="left:1256px;top:1px;width:1px;height:126px;background:#eef3fa"></div><div class="a" style="left:0;bottom:0;width:1257px;height:1px;background:#eef3fa"></div><div class="cnt" style="height:88px"><div class="hd"></div><div class="h" style="left:0;width:16px;background:linear-gradient(#fbfbfb,#ececec)"></div><div class="h" style="left:16px;width:61px"><span class="hs">Номер</span></div><div class="h" style="left:77px;width:51px"><span class="hs">Время</span></div><div class="h" style="left:128px;width:41px"><span class="hs">Период</span></div><div class="h" style="left:169px;width:61px"><span class="hs">Заявка</span></div><div class="h" style="left:230px;width:66px"><span class="hs">Инструмент</span></div><div class="h" style="left:296px;width:56px"><span class="hs">Операция</span></div><div class="h" style="left:352px;width:86px"><span class="hs">Счет</span></div><div class="h" style="left:438px;width:41px"><span class="hs">Цена</span></div><div class="h" style="left:479px;width:51px"><span class="hs">Кол-во</span></div><div class="h" style="left:530px;width:101px"><span class="hs">Объем</span></div><div class="h" style="left:631px;width:81px"><span class="hs">Комментарий</span></div><div class="gl" style="left:15px;top:13px;height:75px"></div><div class="gl" style="left:76px;top:13px;height:75px"></div><div class="gl" style="left:127px;top:13px;height:75px"></div><div class="gl" style="left:168px;top:13px;height:75px"></div><div class="gl" style="left:229px;top:13px;height:75px"></div><div class="gl" style="left:295px;top:13px;height:75px"></div><div class="gl" style="left:351px;top:13px;height:75px"></div><div class="gl" style="left:437px;top:13px;height:75px"></div><div class="gl" style="left:478px;top:13px;height:75px"></div><div class="gl" style="left:529px;top:13px;height:75px"></div><div class="gl" style="left:630px;top:13px;height:75px"></div><div class="gl" style="left:711px;top:13px;height:75px"></div><div class="rn" style="top:13px">1</div><div class="rn" style="top:29px">2</div><div class="rn" style="top:45px">3</div><div class="rn" style="top:61px"></div><div class="rn" style="top:77px"></div><div class="c d " style="left:16px;top:13px;width:60px">......................</div><div class="c l " style="left:77px;top:13px;width:50px">11:37:08</div><div class="c on " style="left:128px;top:13px;width:40px">Нормальная</div><div class="c d " style="left:169px;top:13px;width:60px">......................</div><div class="c o k " style="left:230px;top:13px;width:65px">BRH0 [ФОРТС</div><div class="c l " style="left:296px;top:13px;width:55px">Купля</div><div class="c l " style="left:352px;top:13px;width:85px">7666szm</div><div class="c r " style="left:438px;top:13px;width:40px">55,99</div><div class="c r " style="left:479px;top:13px;width:50px">1</div><div class="c r " style="left:530px;top:13px;width:100px">35 178,74</div><div class="c l " style="left:631px;top:13px;width:80px">7666szm/</div><div class="c d " style="left:16px;top:29px;width:60px">......................</div><div class="c l " style="left:77px;top:29px;width:50px">12:15:14</div><div class="c on " style="left:128px;top:29px;width:40px">Нормальная</div><div class="c d " style="left:169px;top:29px;width:60px">......................</div><div class="c o k " style="left:230px;top:29px;width:65px">BRH0 [ФОРТС</div><div class="c l " style="left:296px;top:29px;width:55px">Купля</div><div class="c l " style="left:352px;top:29px;width:85px">7666szm</div><div class="c r " style="left:438px;top:29px;width:40px">55,75</div><div class="c r " style="left:479px;top:29px;width:50px">1</div><div class="c r " style="left:530px;top:29px;width:100px">35 027,95</div><div class="c l " style="left:631px;top:29px;width:80px">7666szm/</div><div class="c d " style="left:16px;top:45px;width:60px">......................</div><div class="c l " style="left:77px;top:45px;width:50px">12:22:48</div><div class="c on " style="left:128px;top:45px;width:40px">Нормальная</div><div class="c d " style="left:169px;top:45px;width:60px">......................</div><div class="c o k " style="left:230px;top:45px;width:65px">BRH0 [ФОРТС</div><div class="c l " style="left:296px;top:45px;width:55px">Продажа</div><div class="c l " style="left:352px;top:45px;width:85px">7666szm</div><div class="c r " style="left:438px;top:45px;width:40px">55,75</div><div class="c r " style="left:479px;top:45px;width:50px">2</div><div class="c r " style="left:530px;top:45px;width:100px">70 055,90</div></div></div>
<svg class="a" style="left:0;top:0;pointer-events:none" width="1304" height="608" viewBox="0 0 1304 608" fill="none" stroke="#000" stroke-width="1.150" stroke-linejoin="round" stroke-linecap="round" shape-rendering="crispEdges">
<path d="M123.500 335.500L123.500 328.500L124.500 327.500L131 326.600L134.200 325.500L151.800 325L163.300 324L164.100 322.700L170.200 322L184 321.200L196.300 320L198.600 319L215 318.500L227.900 318.500L238.500 318.500L245.500 320L256 323.500L273.700 325.600L291.400 325.800L309 325.200L326.600 324L344.300 323.300L361.500 323.500L388 324L396.700 325.800L412.600 327.300L435.500 327L444.300 324.700L455 321.700L472.600 321.200L497.300 321.200L504.300 322.900L529 324.300L548.400 324.700L553.300 327L553.700 334.900L553.300 342L551 345.500L546.600 346.400L536 348.200L493.700 348.200L423.200 348.200L359.700 348.200L352.600 346.900L335 346.600L326.600 346.900L291.400 346L273.700 345.200L238.500 345.400L198.600 345.400L197.100 344.300L171 344.300L165.600 342.800L159.500 343.400L154.900 342.300L144.100 341.800L141.100 342.300L135.700 341.500L134.200 339.600L128 338.500L125 336.500Z"/>
<path d="M0 544L12.900 542.900L32.200 543.500L43 544.600L49.400 546.100L85.900 547.200L128.800 547.200L169.600 546.700L176 545L193.300 543.500L225.500 543.300L236.200 543.500L253.400 546.100L268.400 549.300L280 551.300L316 551.900L362 551.200L380.400 550.200L419.500 549.100L435.600 547.900L467.800 547.900L477 551.200L500 552.500L523 553.700L542.600 553.700L549.500 559.900L549.500 572.100L525.300 572.100L518.400 570.700L500 570.300L431 570.300L421.800 571.900L362 572.100L280 572.200L171.800 572.300L118 571.900L113.800 570.400L64.400 570.400L32.200 570.800L19.300 569.700L12.900 567.600L0 567"/>
</svg>
</body></html>
